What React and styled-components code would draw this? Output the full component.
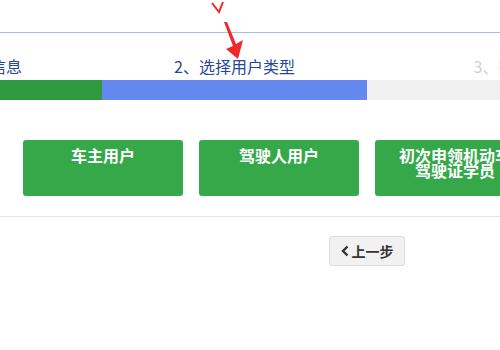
import React from 'react';
import styled, { createGlobalStyle } from 'styled-components';

const steps = [
  { label: '1、注册人信息', state: 'done', width: 265 },
  { label: '2、选择用户类型', state: 'active', width: 265 },
  { label: '3、完成', state: 'todo', width: 270 },
];

const userTypes = ['车主用户', '驾驶人用户', '初次申领机动车驾驶证学员'];

export default function App() {
  return (
    <Page>
      <GlobalStyle />
      <TopRule />
      <StepRow>
        {steps.map((s) => (
          <Step key={s.label} width={s.width}>
            <StepLabel state={s.state}>{s.label}</StepLabel>
            <StepBar state={s.state} />
          </Step>
        ))}
      </StepRow>
      <TypeRow>
        {userTypes.map((t) => (
          <TypeButton key={t}>{t}</TypeButton>
        ))}
      </TypeRow>
      <Divider />
      <Actions>
        <BackButton>
          <Chevron viewBox="0 0 8 12">
            <path d="M6.5 1.5 L2 6 L6.5 10.5" />
          </Chevron>
          上一步
        </BackButton>
      </Actions>
      <Annotation viewBox="0 0 500 70">
        <polyline points="212,3 219,12 223,2" />
        <polygon points="224,22 227,22 236,44 243,40 238,59 226,49 233,46" />
      </Annotation>
    </Page>
  );
}

const GlobalStyle = createGlobalStyle`
  html, body {
    margin: 0;
    padding: 0;
    background: #fff;
    overflow: hidden;
  }
  body {
    font-family: "Microsoft YaHei", "Noto Sans CJK SC", sans-serif;
  }
`;

const Page = styled.div`
  position: relative;
  width: 500px;
  height: 350px;
  overflow: hidden;
  padding-top: 32px;
  box-sizing: border-box;
`;

const TopRule = styled.div`
  height: 1px;
  background: #a9bfe2;
`;

const StepRow = styled.div`
  display: flex;
  margin-left: -163px;
  margin-top: 19px;
`;

const Step = styled.div`
  flex: 0 0 ${(p) => p.width}px;
  display: flex;
  flex-direction: column;
  align-items: center;
`;

const StepLabel = styled.div`
  font-size: 16px;
  line-height: 28px;
  height: 28px;
  white-space: nowrap;
  color: ${(p) => (p.state === 'todo' ? '#cfcfcf' : '#24489a')};
`;

const StepBar = styled.div`
  align-self: stretch;
  height: 20px;
  background: ${(p) =>
    p.state === 'done' ? '#2e9a40' : p.state === 'active' ? '#6389f0' : '#f0f0f0'};
`;

const TypeRow = styled.div`
  display: flex;
  gap: 16px;
  padding-left: 23px;
  margin-top: 40px;
`;

const TypeButton = styled.div`
  flex: 0 0 160px;
  height: 56px;
  box-sizing: border-box;
  padding: 8px 20px 0;
  background: #35a84a;
  border-radius: 3px;
  color: #fff;
  font-size: 16px;
  font-weight: bold;
  line-height: 15px;
  text-align: center;
`;

const Divider = styled.div`
  height: 1px;
  background: #e6e6e6;
  margin-top: 20px;
`;

const Actions = styled.div`
  display: flex;
  padding-left: 329px;
  margin-top: 19px;
`;

const BackButton = styled.div`
  width: 76px;
  height: 30px;
  box-sizing: border-box;
  display: flex;
  align-items: center;
  justify-content: center;
  gap: 3px;
  background: #f1f1f1;
  border: 1px solid #dcdcdc;
  border-radius: 3px;
  font-size: 14px;
  font-weight: bold;
  color: #333;
`;

const Chevron = styled.svg`
  width: 8px;
  height: 12px;
  fill: none;
  stroke: #333;
  stroke-width: 2.4;
`;

const Annotation = styled.svg`
  position: absolute;
  left: 0;
  top: 0;
  width: 500px;
  height: 70px;
  pointer-events: none;
  polyline {
    fill: none;
    stroke: #f0282a;
    stroke-width: 2;
  }
  polygon {
    fill: #f0282a;
  }
`;
